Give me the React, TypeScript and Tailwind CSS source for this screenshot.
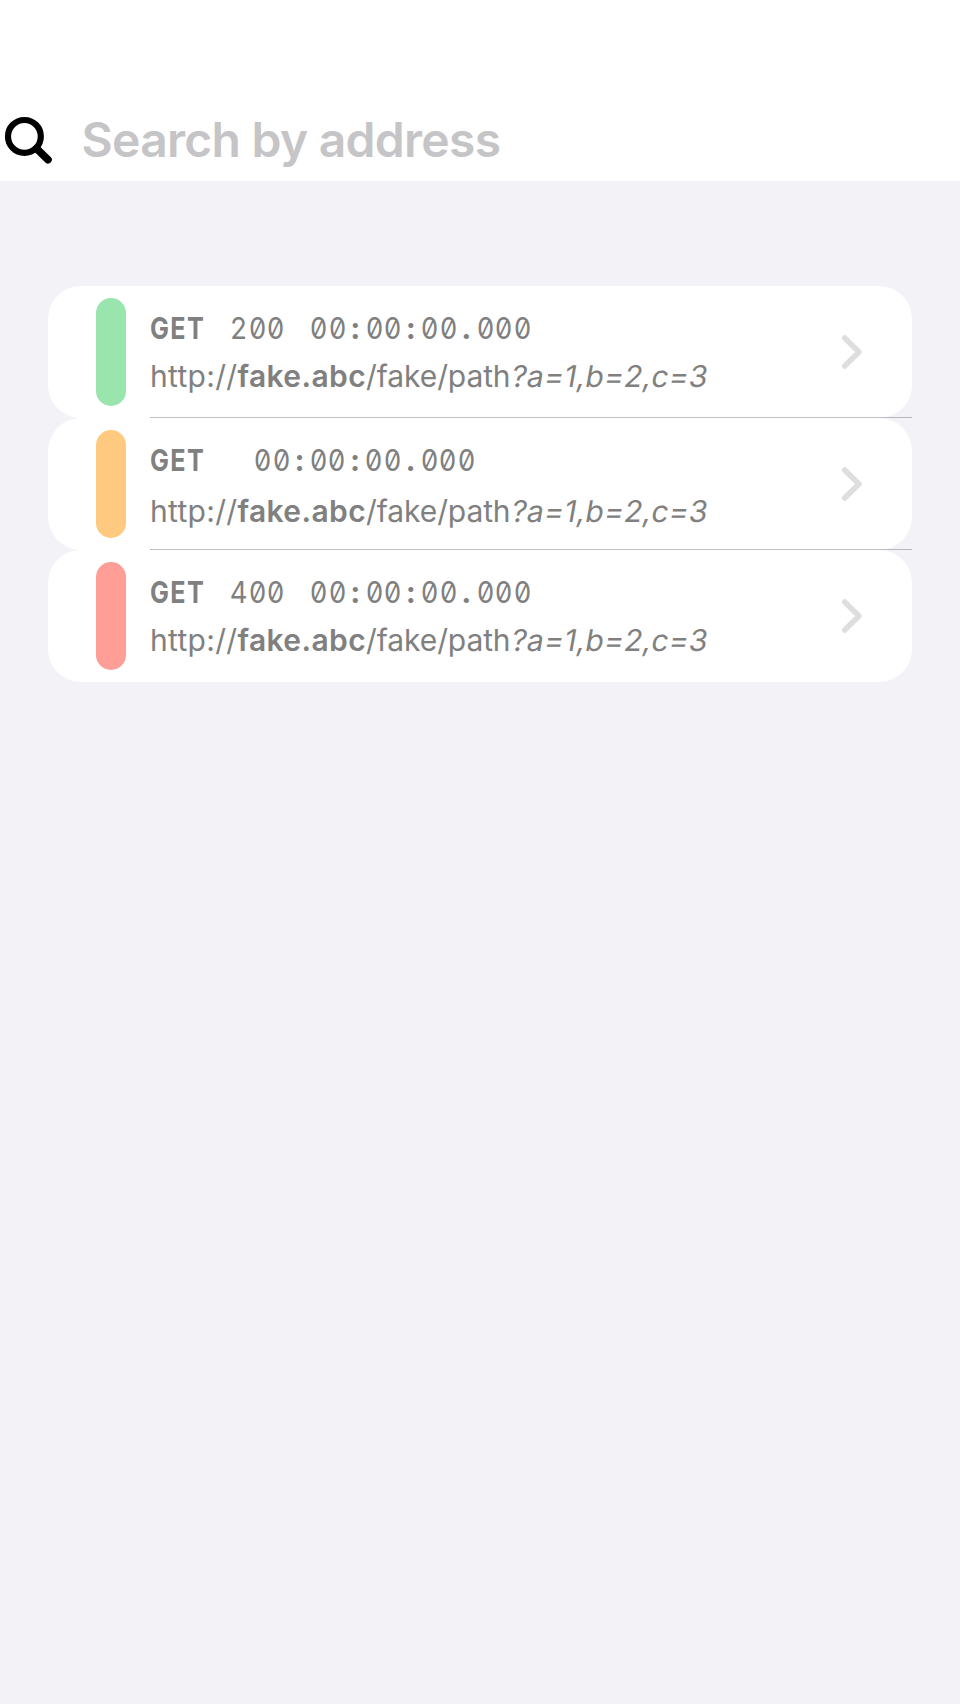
type Entry = {
  status: string;
  bar: string;
  timeOffset: string;
  urlOffset: string;
  last?: boolean;
};

const entries: Entry[] = [
  { status: "200", bar: "bg-[#99e5ad]", timeOffset: "ml-[24.4px]", urlOffset: "mt-[12px]" },
  { status: "", bar: "bg-[#ffca80]", timeOffset: "ml-[48.2px]", urlOffset: "mt-[15px]" },
  { status: "400", bar: "bg-[#ff9d97]", timeOffset: "ml-[24.4px]", urlOffset: "mt-[12px]", last: true },
];

function SearchBar() {
  return (
    <header className="flex h-[181px] items-end bg-white">
      <div className="flex h-[82px] w-full items-center">
        <svg className="mt-[2px] ml-[4px] h-[50px] w-[50px] shrink-0" viewBox="0 0 50 50" fill="none" stroke="#000" strokeLinecap="round">
          <circle cx="20.4" cy="20.4" r="16.4" strokeWidth="6.2" />
          <path d="M32.5 32.6 44 43.7" strokeWidth="7.6" />
        </svg>
        <span className="ml-[27.5px] text-[48px] leading-[58px] font-semibold tracking-[-0.72px] whitespace-nowrap text-[#c5c5c7]">
          Search by address
        </span>
      </div>
    </header>
  );
}

function Mono({ text }: { text: string }) {
  return (
    <>
      {text.split("").map((c, i) => (
        <span
          key={i}
          className={
            /\d/.test(c)
              ? "inline-block w-[18.51px] scale-x-[0.91] text-center"
              : "inline-block w-[18.51px] text-center font-bold"
          }
        >
          {c}
        </span>
      ))}
    </>
  );
}

function Row({ status, bar, timeOffset, urlOffset, last }: Entry) {
  return (
    <li className="relative flex h-[132px] rounded-[33px] bg-white pl-[48px]">
      <div className={`mt-[12px] h-[108px] w-[30px] shrink-0 rounded-full ${bar}`} />
      <div className="ml-[24px] flex-1 text-[30px] leading-[36px] whitespace-pre text-[#808080]">
        <div className="mt-[24px] flex h-[36px] [font-feature-settings:'tnum','zero']">
          <span className="w-[55px] origin-left scale-x-[0.84] font-bold tracking-[1.7px]">GET</span>
          {status && (
            <span className="ml-[24.2px] w-[55.5px]">
              <Mono text={status} />
            </span>
          )}
          <span className={timeOffset}>
            <Mono text="00:00:00.000" />
          </span>
        </div>
        <div className={`flex h-[36px] ${urlOffset}`}>
          <span className="tracking-[0.3px]">http://</span>
          <b className="font-semibold tracking-[0.4px]">fake.abc</b>
          <span className="tracking-[-0.1px]">/fake/path</span>
          <span className="-ml-px inline-block origin-[0_29px] -skew-x-[10deg] tracking-[0.23px]">?a=1,b=2,c=3</span>
        </div>
      </div>
      <svg className="mt-[48px] mr-[49px] h-[36px] w-[22px] shrink-0" viewBox="0 0 22 36" fill="none" stroke="#dedede" strokeWidth="5.5" strokeLinecap="round" strokeLinejoin="round">
        <path d="M3.7 4 18 18 3.7 32" />
      </svg>
      {!last && <div className="absolute right-0 bottom-0 left-[102px] z-10 h-px bg-[#3c3c4352]" />}
    </li>
  );
}

export default function App() {
  return (
    <main className="min-h-[1704px] w-full bg-[#f2f2f7] font-['Inter',sans-serif]">
      <SearchBar />
      <ul className="mx-[48px] mt-[105px]">
        {entries.map((e, i) => (
          <Row key={i} {...e} />
        ))}
      </ul>
    </main>
  );
}
